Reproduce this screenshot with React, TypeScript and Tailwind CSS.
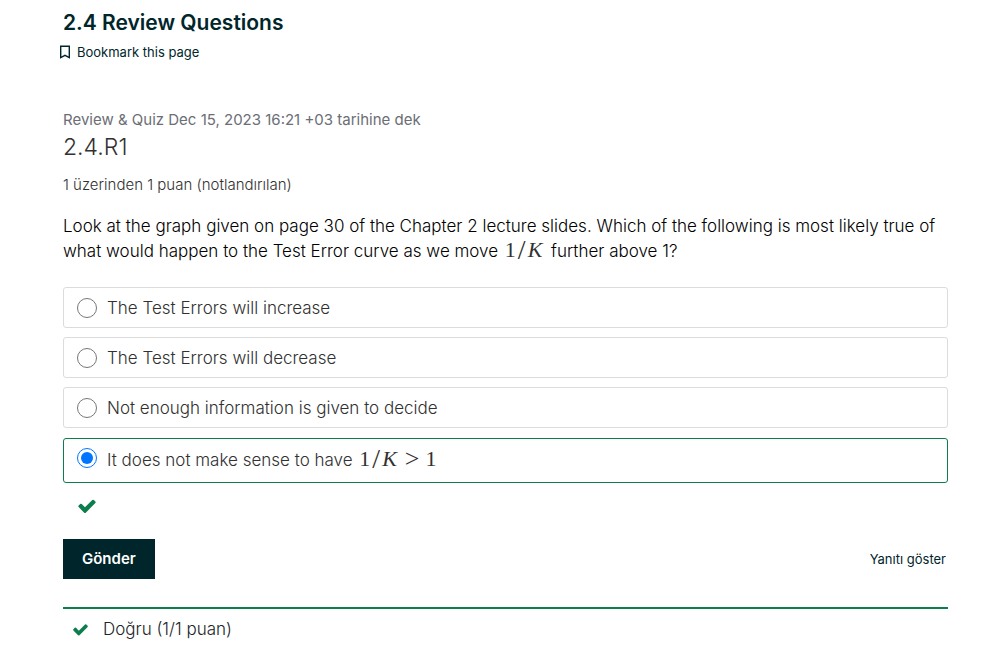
import { useState } from "react";

function Check({ className }: { className: string }) {
  return (
    <svg viewBox="0 0 1792 1792" fill="currentColor" aria-hidden="true" className={className}>
      <path d="M1671 566q0 40-28 68l-724 724-136 136q-28 28-68 28t-68-28l-136-136-362-362q-28-28-28-68t28-68l136-136q28-28 68-28t68 28l294 295 656-657q28-28 68-28t68 28l136 136q28 28 28 68z" />
    </svg>
  );
}

function Formula({ above }: { above?: string }) {
  return (
    <span className="mx-0.5 inline-flex items-center gap-0.5 font-['Liberation_Serif',serif] text-[22px] leading-5 font-normal text-[#313131]">
      <span>1</span>
      <span className="text-[28px] leading-5">/</span>
      <i className="pr-0.5">K</i>
      {above && (
        <>
          <span className="px-1 text-[26px] leading-5">&gt;</span>
          <span>{above}</span>
        </>
      )}
    </span>
  );
}

const choices = [
  { id: "increase", label: "The Test Errors will increase" },
  { id: "decrease", label: "The Test Errors will decrease" },
  { id: "unknown", label: "Not enough information is given to decide" },
];

export default function App() {
  const [selected, setSelected] = useState("nonsense");

  return (
    <main className="bg-white pt-[9px] pr-[58px] pb-6 pl-[63px] font-['Inter',sans-serif] font-light text-[#212529]">
      <h1 className="text-[21px] leading-7 font-semibold text-[#00262b]">2.4 Review Questions</h1>
      <button type="button" className="-ml-1 mt-[3px] flex items-center gap-1.5 text-[13px] leading-6 font-normal text-[#00262b]">
        <svg viewBox="0 0 12 14" fill="none" stroke="currentColor" strokeWidth="1.4" aria-hidden="true" className="h-3.5 w-3">
          <path d="M1.7 1.2h8.6v11.4L6 10.3l-4.3 2.3z" />
        </svg>
        Bookmark this page
      </button>

      <section className="mt-11">
        <p className="text-[15px] leading-6 font-normal text-[#6b6e75]">Review &amp; Quiz Dec 15, 2023 16:21 +03 tarihine dek</p>
        <h2 className="text-[23px] leading-[30px] text-[#313131]">2.4.R1</h2>
        <p className="mt-3 text-[15px] leading-[22px] text-[#313131]">1 üzerinden 1 puan (notlandırılan)</p>

        <p className="mt-[18px] text-[17px] leading-[25px] text-black">
          Look at the graph given on page 30 of the Chapter 2 lecture slides. Which of the following is most likely true of
          what would happen to the Test Error curve as we move{" "}
          <Formula /> further above 1?
        </p>

        <div role="radiogroup" aria-label="Answer" className="mt-[23px] flex flex-col gap-[9px] text-[17px] leading-6 text-[#313131]">
          {choices.map((choice) => (
            <label key={choice.id} className="flex h-[41px] items-center gap-2.5 rounded-[3px] border border-[#dcdcdc] px-[13px]">
              <input
                type="radio"
                name="answer"
                className="size-5"
                checked={selected === choice.id}
                onChange={() => setSelected(choice.id)}
              />
              {choice.label}
            </label>
          ))}
          <label className="mt-px flex h-[45px] items-start gap-2.5 rounded-[3px] border border-[#0d7d4d] px-[13px] pt-[9px]">
            <input
              type="radio"
              name="answer"
              className="size-5"
              checked={selected === "nonsense"}
              onChange={() => setSelected("nonsense")}
            />
            <span>
              It does not make sense to have <Formula above="1" />
            </span>
          </label>
        </div>
        <Check className="mt-[13px] ml-[14px] size-5 text-[#0d7d4d]" />
      </section>

      <div className="mt-[23px] flex items-center justify-between">
        <button type="button" className="h-10 bg-[#00262b] px-[19px] text-[15px] leading-6 font-semibold text-white">Gönder</button>
        <button type="button" className="pr-0.5 text-[13px] leading-6 font-normal text-[#00262b]">Yanıtı göster</button>
      </div>

      <div className="mt-7 flex items-center gap-3.5 border-t-2 border-[#0d7d4d] pt-2 pl-[9px] text-[17px] leading-6">
        <Check className="size-[17px] text-[#0d7d4d]" />
        Doğru (1/1 puan)
      </div>
    </main>
  );
}
